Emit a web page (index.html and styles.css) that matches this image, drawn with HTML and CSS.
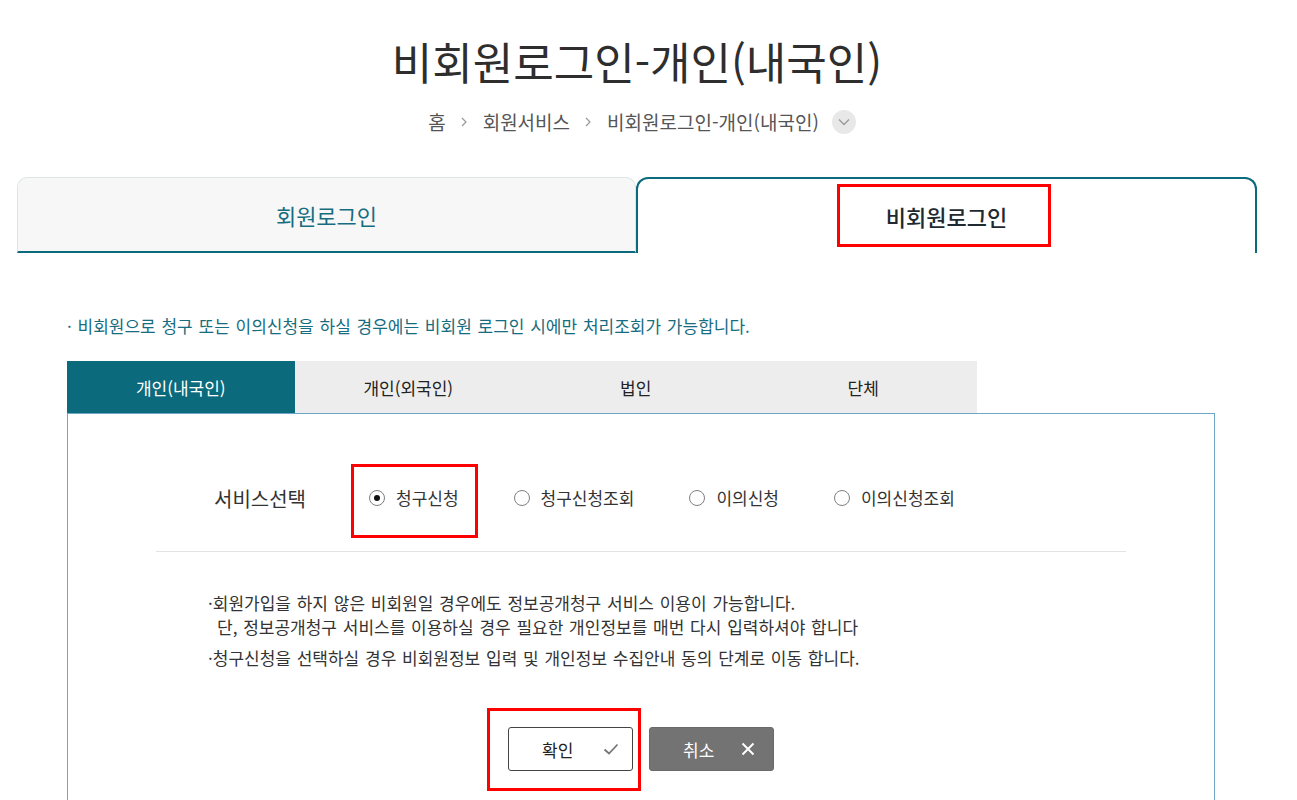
FILE: index.html
```html
<!DOCTYPE html>
<html lang="ko">
<head>
    <meta charset="UTF-8">
    <meta name="viewport" content="width=device-width, initial-scale=1.0">
    <title>비회원로그인-개인(내국인)</title>
    <link rel="stylesheet" href="styles.css">
</head>
<body>
    <div class="container">
        <div class="page-head">
            <h1 class="title">비회원로그인-개인(내국인)</h1>
            <div class="breadcrumb">
                <span>홈</span>
                <svg class="crumb-arrow" width="7" height="10" viewBox="0 0 7 10"><path d="M1 1l4 4-4 4" fill="none" stroke="#999" stroke-width="1.2"/></svg>
                <span>회원서비스</span>
                <svg class="crumb-arrow" width="7" height="10" viewBox="0 0 7 10"><path d="M1 1l4 4-4 4" fill="none" stroke="#999" stroke-width="1.2"/></svg>
                <span>비회원로그인-개인(내국인)</span>
                <span class="crumb-more">
                    <svg width="12" height="8" viewBox="0 0 12 8"><path d="M1 1.5l5 5 5-5" fill="none" stroke="#999" stroke-width="1.3"/></svg>
                </span>
            </div>
        </div>

        <div class="login-tabs">
            <a href="#" class="login-tab">회원로그인</a>
            <a href="#" class="login-tab active"><span class="marked mark-tab">비회원로그인</span></a>
        </div>

        <div class="content">
            <p class="notice">· 비회원으로 청구 또는 이의신청을 하실 경우에는 비회원 로그인 시에만 처리조회가 가능합니다.</p>

            <div class="type-tabs">
                <a href="#" class="type-tab active">개인(내국인)</a>
                <a href="#" class="type-tab">개인(외국인)</a>
                <a href="#" class="type-tab">법인</a>
                <a href="#" class="type-tab">단체</a>
            </div>

            <div class="panel">
                <div class="service-row">
                    <span class="service-label">서비스선택</span>
                    <label class="radio-item marked mark-radio"><span class="radio checked"></span>청구신청</label>
                    <label class="radio-item"><span class="radio"></span>청구신청조회</label>
                    <label class="radio-item"><span class="radio"></span>이의신청</label>
                    <label class="radio-item"><span class="radio"></span>이의신청조회</label>
                </div>

                <ul class="guide">
                    <li>·회원가입을 하지 않은 비회원일 경우에도 정보공개청구 서비스 이용이 가능합니다.<br>단, 정보공개청구 서비스를 이용하실 경우 필요한 개인정보를 매번 다시 입력하셔야 합니다</li>
                    <li>·청구신청을 선택하실 경우 비회원정보 입력 및 개인정보 수집안내 동의 단계로 이동 합니다.</li>
                </ul>

                <div class="button-row">
                    <button class="btn btn-ok marked mark-btn">확인
                        <svg width="16" height="12" viewBox="0 0 16 12"><path d="M1.5 6.5l4.5 4 8.5-9" fill="none" stroke="#777" stroke-width="1.8"/></svg>
                    </button>
                    <button class="btn btn-cancel">취소
                        <svg width="14" height="14" viewBox="0 0 14 14"><path d="M1.5 1.5l11 11M12.5 1.5l-11 11" fill="none" stroke="#fff" stroke-width="2"/></svg>
                    </button>
                </div>
            </div>
        </div>
    </div>
</body>
</html>
```

FILE: styles.css
```css
body {
    margin: 0;
    font-family: "Noto Sans CJK KR", "Noto Sans", sans-serif;
    color: #333;
    background-color: white;
}
.container {
    width: 1240px;
    margin-left: 17px;
}
.page-head {
    padding-top: 35px;
    text-align: center;
}
.title {
    margin: 0;
    font-size: 44px;
    font-weight: 400;
    line-height: 53px;
    color: #2e2e2e;
}
.breadcrumb {
    margin-top: 22px;
    display: flex;
    align-items: center;
    justify-content: center;
    gap: 13px;
    font-size: 19px;
    line-height: 24px;
    color: #555;
    padding-left: 10px;
}
.crumb-arrow {
    margin: 0 2px;
}
.crumb-more {
    width: 24px;
    height: 24px;
    border-radius: 50%;
    background-color: #e8e8e8;
    display: flex;
    align-items: center;
    justify-content: center;
}
.login-tabs {
    display: flex;
    margin-top: 43px;
}
.login-tab {
    flex: 1;
    height: 76px;
    box-sizing: border-box;
    display: flex;
    align-items: center;
    justify-content: center;
    font-size: 22px;
    text-decoration: none;
    color: #176d80;
    background-color: #f7f7f7;
    border: 1px solid #dfe5e7;
    border-bottom: 2px solid #0b6a7c;
    border-radius: 10px 10px 0 0;
}
.login-tab.active {
    background-color: white;
    color: #1e2a30;
    font-weight: 500;
    border: 2px solid #0b6a7c;
    border-bottom: none;
    border-radius: 12px 12px 0 0;
}
.marked {
    position: relative;
}
.marked::after {
    content: "";
    position: absolute;
    border: 3px solid #f00;
    pointer-events: none;
}
.mark-tab {
    line-height: 30px;
}
.mark-tab::after {
    top: -17px;
    bottom: -16px;
    left: -49px;
    right: -44px;
}
.content {
    margin-left: 50px;
    width: 1148px;
}
.notice {
    margin: 61px 0 0;
    font-size: 17px;
    line-height: 24px;
    word-spacing: 1px;
    color: #176d80;
}
.type-tabs {
    display: flex;
    width: 910px;
    margin-top: 23px;
}
.type-tab {
    flex: 1;
    height: 52px;
    display: flex;
    align-items: center;
    justify-content: center;
    font-size: 17px;
    text-decoration: none;
    color: #222;
    background-color: #ededed;
}
.type-tab.active {
    background-color: #0b6a7c;
    color: white;
}
.panel {
    border: 1px solid #6ea7c6;
    padding: 0 88px 40px;
}
.service-row {
    display: flex;
    align-items: center;
    height: 50px;
    margin-top: 59px;
    padding: 0 0 28px 58px;
    border-bottom: 1px solid #e3e3e3;
}
.service-label {
    font-size: 20px;
    margin-right: 63px;
}
.radio-item {
    display: flex;
    align-items: center;
    font-size: 17px;
    line-height: 24px;
    margin-right: 55px;
    cursor: pointer;
}
.radio {
    width: 16px;
    height: 16px;
    border: 1px solid #808080;
    border-radius: 50%;
    box-sizing: border-box;
    margin-right: 11px;
    display: flex;
    align-items: center;
    justify-content: center;
}
.radio.checked::before {
    content: "";
    width: 6px;
    height: 6px;
    border-radius: 50%;
    background-color: #111;
}
.mark-radio::after {
    top: -22px;
    bottom: -28px;
    left: -18px;
    right: -19px;
}
.guide {
    list-style: none;
    margin: 39px 0 0;
    padding: 0 0 0 52px;
    font-size: 17px;
    line-height: 24px;
    word-spacing: 1px;
}
.guide li {
    padding-left: 9px;
    text-indent: -9px;
    margin-bottom: 7px;
}
.button-row {
    display: flex;
    justify-content: center;
    gap: 16px;
    margin-top: 57px;
}
.btn {
    width: 125px;
    height: 44px;
    box-sizing: border-box;
    display: flex;
    align-items: center;
    justify-content: space-between;
    padding: 0 13px 0 33px;
    font-family: inherit;
    font-size: 17px;
    border-radius: 3px;
    cursor: pointer;
}
.btn-ok {
    background-color: white;
    color: #222;
    border: 1px solid #444;
}
.btn-cancel {
    background-color: #737373;
    color: white;
    border: 1px solid #6a6a6a;
    padding-right: 18px;
}
.mark-btn::after {
    top: -20px;
    bottom: -21px;
    left: -22px;
    right: -9px;
}
```
